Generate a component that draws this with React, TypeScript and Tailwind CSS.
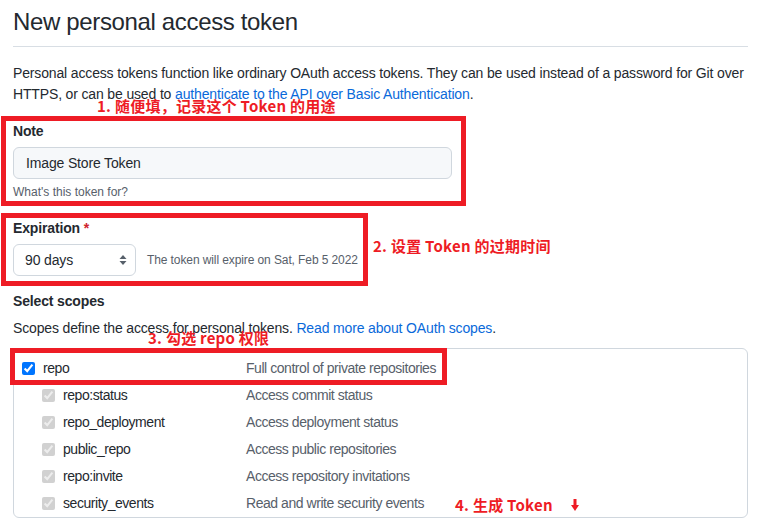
import React from "react";

const subScopes = [
  { name: "repo:status", desc: "Access commit status" },
  { name: "repo_deployment", desc: "Access deployment status" },
  { name: "public_repo", desc: "Access public repositories" },
  { name: "repo:invite", desc: "Access repository invitations" },
  { name: "security_events", desc: "Read and write security events" },
];

const Note = ({ className, children }: { className: string; children: React.ReactNode }) => (
  <div
    className={`absolute whitespace-nowrap text-[15px] leading-[20px] font-bold tracking-[0.25px] text-[#ee1c25] font-['Noto_Sans_CJK_SC',sans-serif] ${className}`}
  >
    {children}
  </div>
);

const App = () => {
  return (
    <div className="relative w-[760px] h-[521px] overflow-hidden bg-white pl-[13px] pr-[12px] text-[14px] leading-[21px] text-[#24292f] tracking-[-0.15px] font-['Liberation_Sans',Arial,sans-serif]">
      {/* Header */}
      <h1 className="pt-[7px] pb-[9px] border-b border-[#d8dee4] text-[24px] leading-[30px] font-normal tracking-[-0.35px]">
        New personal access token
      </h1>

      <p className="mt-[16px]">
        Personal access tokens function like ordinary OAuth access tokens. They can be used instead of a password for Git over
        <br />
        HTTPS, or can be used to{" "}
        <a className="text-[#0969da]">authenticate to the API over Basic Authentication</a>.
      </p>

      {/* Note */}
      <div className="mt-[11px] -ml-[12px] w-[465px] border-[5px] border-[#ee1c25] pl-[7px] pr-[9px]">
        <div className="font-bold">Note</div>
        <div className="mt-[5px] h-[32px] flex items-center rounded-[6px] border border-[#d0d7de] bg-[#f6f8fa] pl-[12px]">
          Image Store Token
        </div>
        <div className="mt-[4px] text-[12px] leading-[18px] text-[#57606a] tracking-normal">What's this token for?</div>
      </div>

      {/* Expiration */}
      <div className="mt-[7px] -ml-[12px] w-[367px] border-[5px] border-[#ee1c25] pl-[7px] pb-[5px]">
        <div className="font-bold">
          Expiration <span className="text-[#cf222e]">*</span>
        </div>
        <div className="mt-[5px] flex items-center">
          <div className="w-[123px] h-[32px] flex items-center justify-between rounded-[6px] border border-[#d0d7de] bg-white pl-[11px] pr-[8px]">
            <span>90 days</span>
            <svg width="8" height="12" viewBox="0 0 8 12">
              <polygon points="0.5,5 4,1 7.5,5" fill="#57606a" />
              <polygon points="0.5,7 4,11 7.5,7" fill="#57606a" />
            </svg>
          </div>
          <span className="ml-[11px] text-[12px] text-[#57606a] tracking-[-0.1px]">
            The token will expire on Sat, Feb 5 2022
          </span>
        </div>
      </div>

      {/* Scopes */}
      <div className="mt-[5px] font-bold">Select scopes</div>
      <p className="mt-[6px]">
        Scopes define the access for personal tokens.{" "}
        <a className="text-[#0969da]">Read more about OAuth scopes</a>.
      </p>

      <div className="relative mt-[9px] rounded-[6px] border border-[#d0d7de] pt-[6px] tracking-[-0.45px]">
        <div className="flex items-center h-[27px] pl-[8px]">
          <input type="checkbox" checked readOnly className="w-[13px] h-[13px]" />
          <span className="ml-[8px] w-[203px]">repo</span>
          <span className="text-[#57606a]">Full control of private repositories</span>
        </div>
        {subScopes.map((s) => (
          <div key={s.name} className="flex items-center h-[27px] pl-[28px]">
            <input type="checkbox" checked disabled readOnly className="w-[13px] h-[13px]" />
            <span className="ml-[8px] w-[183px]">{s.name}</span>
            <span className="text-[#57606a]">{s.desc}</span>
          </div>
        ))}
        <div className="absolute -left-[4px] -top-[1px] w-[437px] h-[37px] border-[5px] border-[#ee1c25]" />
      </div>

      {/* Annotations */}
      <Note className="left-[97px] top-[96px]">1. 随便填，记录这个 Token 的用途</Note>
      <Note className="left-[373px] top-[236px]">2. 设置 Token 的过期时间</Note>
      <Note className="left-[148px] top-[328px]">3. 勾选 repo 权限</Note>
      <Note className="left-[455px] top-[495px] flex items-center">
        4. 生成 Token
        <svg width="8" height="12" viewBox="0 0 8 12" className="ml-[18px]">
          <rect x="2.5" y="0" width="3" height="7" fill="#ee1c25" />
          <polygon points="0,6 8,6 4,12" fill="#ee1c25" />
        </svg>
      </Note>
    </div>
  );
};

export default App;
